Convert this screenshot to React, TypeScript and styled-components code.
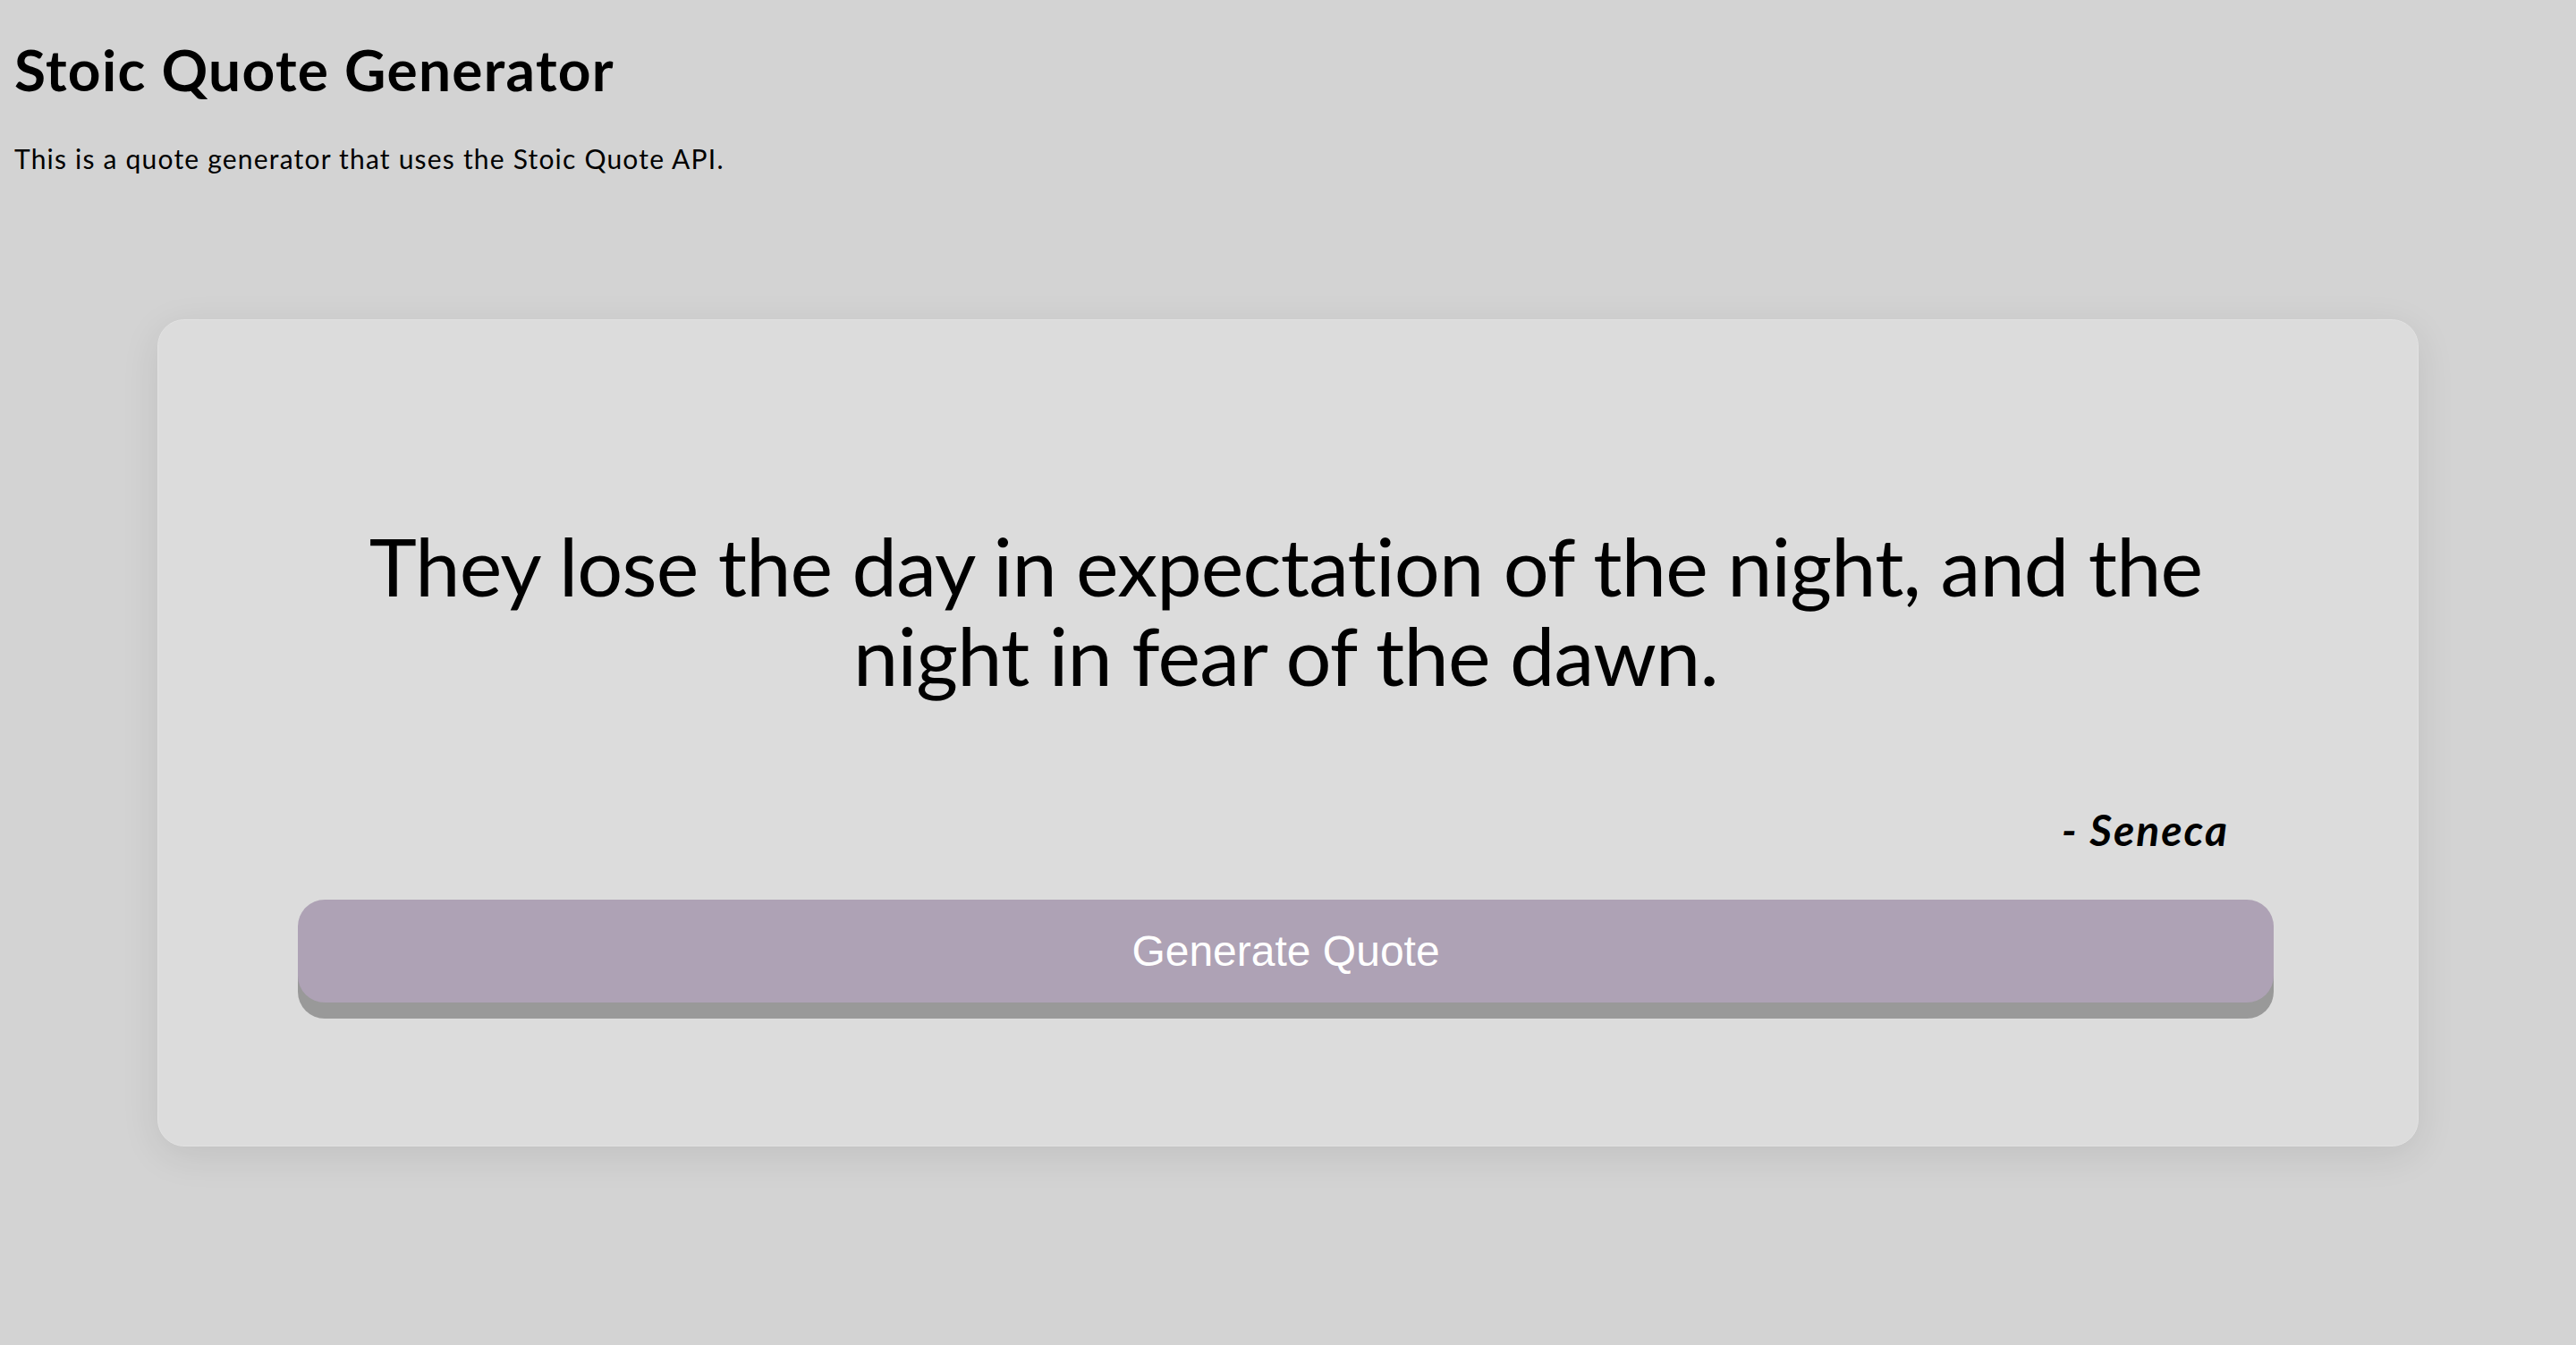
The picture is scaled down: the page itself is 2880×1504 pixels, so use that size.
import React, { useState } from 'react';
import styled, { createGlobalStyle } from 'styled-components';

const GlobalStyle = createGlobalStyle`
  body {
    margin: 0;
    background: #d3d3d3;
    font-family: Lato, 'Open Sans', sans-serif;
    color: #000000;
  }
`;

const Page = styled.div`
  display: flex;
  flex-direction: column;
  min-height: 1504px;
`;

const Header = styled.header`
  padding: 0 16px;
`;

const Title = styled.h1`
  margin: 41px 0 0;
  font-size: 64px;
  line-height: 74px;
  font-weight: 700;
  letter-spacing: 1.3px;
`;

const Subtitle = styled.p`
  margin: 44px 0 0;
  font-size: 30px;
  line-height: 36px;
  letter-spacing: 1.2px;
`;

const Main = styled.main`
  padding: 162px 176px 0;
`;

const Card = styled.section`
  display: flex;
  flex-direction: column;
  align-items: stretch;
  padding: 224px 161px 160px 156px;
  background: #dcdcdc;
  border: 1px solid #e2e2e2;
  border-radius: 30px;
  box-shadow: 0 10px 44px rgba(0, 0, 0, 0.09);
`;

const Quote = styled.p`
  margin: 0;
  font-size: 90px;
  line-height: 100px;
  letter-spacing: -0.8px;
  text-align: center;
`;

const Author = styled.p`
  margin: 117px 0 49px;
  padding-right: 50px;
  font-size: 48px;
  line-height: 58px;
  font-weight: 700;
  font-style: italic;
  letter-spacing: 2px;
  text-align: right;
`;

const GenerateButton = styled.button`
  height: 115px;
  border: none;
  border-radius: 30px;
  background: #aea2b5;
  color: #ffffff;
  font-family: 'Liberation Sans', Arial, sans-serif;
  font-size: 48px;
  cursor: pointer;
  box-shadow: 0 18px 0 #999999;

  &:active {
    transform: translateY(6px);
    box-shadow: 0 12px 0 #999999;
  }
`;

const quotes = [
  { text: 'They lose the day in expectation of the night, and the night in fear of the dawn.', author: 'Seneca' },
  { text: 'You have power over your mind - not outside events. Realize this, and you will find strength.', author: 'Marcus Aurelius' },
  { text: 'It is not what happens to you, but how you react to it that matters.', author: 'Epictetus' },
];

function App() {
  const [index, setIndex] = useState(0);
  const quote = quotes[index];

  return (
    <Page>
      <GlobalStyle />
      <Header>
        <Title>Stoic Quote Generator</Title>
        <Subtitle>This is a quote generator that uses the Stoic Quote API.</Subtitle>
      </Header>
      <Main>
        <Card>
          <Quote>{quote.text}</Quote>
          <Author>- {quote.author}</Author>
          <GenerateButton onClick={() => setIndex((index + 1) % quotes.length)}>
            Generate Quote
          </GenerateButton>
        </Card>
      </Main>
    </Page>
  );
}

export default App;
